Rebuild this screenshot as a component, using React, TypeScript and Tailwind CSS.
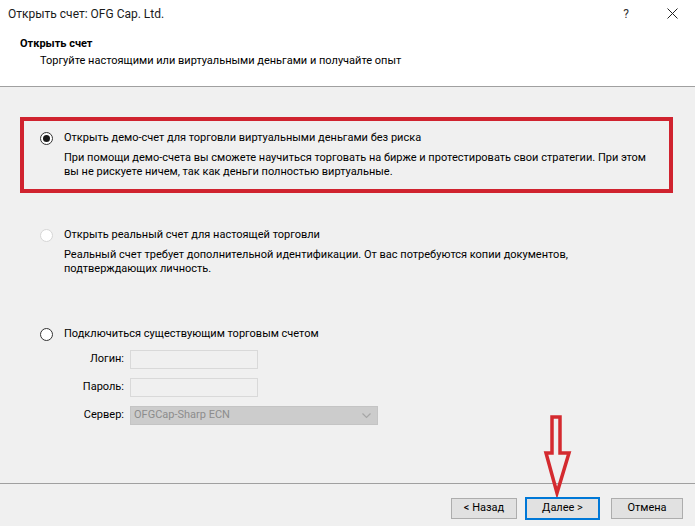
import React, { useState } from "react";

type Choice = "demo" | "real" | "existing";

const Radio: React.FC<{ checked?: boolean; disabled?: boolean }> = ({ checked, disabled }) => (
  <span
    className={`flex h-[13px] w-[13px] shrink-0 items-center justify-center rounded-full border bg-white ${
      disabled ? "border-[#d6d6d6]" : "border-[#333333]"
    }`}
  >
    {checked && <span className="h-[7px] w-[7px] rounded-full bg-[#1a1a1a]" />}
  </span>
);

const App: React.FC = () => {
  const [choice, setChoice] = useState<Choice>("demo");

  return (
    <div
      className="relative flex h-[526px] w-[695px] flex-col overflow-hidden whitespace-nowrap bg-[#f0f0f0] text-[11px] text-black"
      style={{ fontFamily: '"Segoe UI", Roboto, "Noto Sans", sans-serif' }}
    >
      {/* Header */}
      <div className="h-[87px] border-b border-[#a0a0a0] bg-white">
        <div className="flex h-[27px] items-center pl-[8px]">
          <span className="flex-1 text-[12px] text-[#1a1a1a]">Открыть счет: OFG Cap. Ltd.</span>
          <span className="w-[46px] text-center text-[12px] text-[#333]">?</span>
          <span className="flex w-[46px] items-center justify-center">
            <svg width="11" height="11" viewBox="0 0 11 11">
              <path d="M0.5 0.5 L10.5 10.5 M10.5 0.5 L0.5 10.5" stroke="#222" strokeWidth="1" />
            </svg>
          </span>
        </div>
        <div className="mt-[9px] pl-[20px] font-bold leading-[16px]">Открыть счет</div>
        <div className="mt-[1px] pl-[40px] leading-[16px]">
          Торгуйте настоящими или виртуальными деньгами и получайте опыт
        </div>
      </div>

      {/* Body */}
      <div className="flex-1 px-[20px]">
        <div className="mt-[30px] h-[76px] w-[653px] border-[4px] border-[#d0232f] pl-[16px] pt-[9px]">
          <label className="flex items-center gap-[11px] leading-[16px]" onClick={() => setChoice("demo")}>
            <Radio checked={choice === "demo"} />
            <span>Открыть демо-счет для торговли виртуальными деньгами без риска</span>
          </label>
          <p className="mt-[5px] pl-[24px] leading-[14px]">
            При помощи демо-счета вы сможете научиться торговать на бирже и протестировать свои стратегии. При этом
            <br />
            вы не рискуете ничем, так как деньги полностью виртуальные.
          </p>
        </div>

        <div className="mt-[34px] pl-[20px]">
          <label className="flex items-center gap-[11px] leading-[16px]">
            <Radio disabled />
            <span>Открыть реальный счет для настоящей торговли</span>
          </label>
          <p className="mt-[5px] pl-[24px] leading-[14px]">
            Реальный счет требует дополнительной идентификации. От вас потребуются копии документов,
            <br />
            подтверждающих личность.
          </p>
        </div>

        <div className="mt-[50px] pl-[20px]">
          <label className="flex items-center gap-[11px] leading-[16px]" onClick={() => setChoice("existing")}>
            <Radio checked={choice === "existing"} />
            <span>Подключиться существующим торговым счетом</span>
          </label>

          <div className="mt-[8px] flex flex-col gap-[9px]">
            <div className="flex items-center gap-[6px]">
              <span className="w-[84px] text-right">Логин:</span>
              <div className="h-[19px] w-[128px] border border-[#d9d9d9] bg-[#f0f0f0]" />
            </div>
            <div className="flex items-center gap-[6px]">
              <span className="w-[84px] text-right">Пароль:</span>
              <div className="h-[19px] w-[128px] border border-[#d9d9d9] bg-[#f0f0f0]" />
            </div>
            <div className="flex items-center gap-[6px]">
              <span className="w-[84px] text-right">Сервер:</span>
              <div className="flex h-[19px] w-[248px] items-center justify-between border border-[#c4c4c4] bg-[#cccccc] pl-[3px] pr-[6px] text-[#8c8c8c]">
                <span>OFGCap-Sharp ECN</span>
                <svg width="9" height="6" viewBox="0 0 9 6">
                  <path d="M0.5 0.5 L4.5 4.5 L8.5 0.5" fill="none" stroke="#a6a6a6" strokeWidth="1.2" />
                </svg>
              </div>
            </div>
          </div>
        </div>
      </div>

      {/* Footer */}
      <div className="h-[43px] border-t border-[#a0a0a0]">
        <div className="mt-[14px] flex justify-end pr-[12px]">
          <button className="h-[21px] w-[66px] border border-[#adadad] bg-[#e1e1e1]">&lt; Назад</button>
          <button className="ml-[9px] h-[21px] w-[73px] border border-[#0078d7] bg-[#e1e1e1] outline outline-1 outline-[#0078d7]">
            Далее &gt;
          </button>
          <button className="ml-[12px] h-[21px] w-[72px] border border-[#adadad] bg-[#e1e1e1]">Отмена</button>
        </div>
      </div>

      {/* Annotation arrow */}
      <svg className="absolute left-[543px] top-[415px]" width="30" height="82" viewBox="0 0 30 82">
        <path
          d="M9 2 L17 2 L17 38 L26 38 L14 78 L3 38 L9 38 Z"
          fill="none"
          stroke="#d42a2f"
          strokeWidth="3.5"
          strokeLinejoin="miter"
        />
      </svg>
    </div>
  );
};

export default App;
